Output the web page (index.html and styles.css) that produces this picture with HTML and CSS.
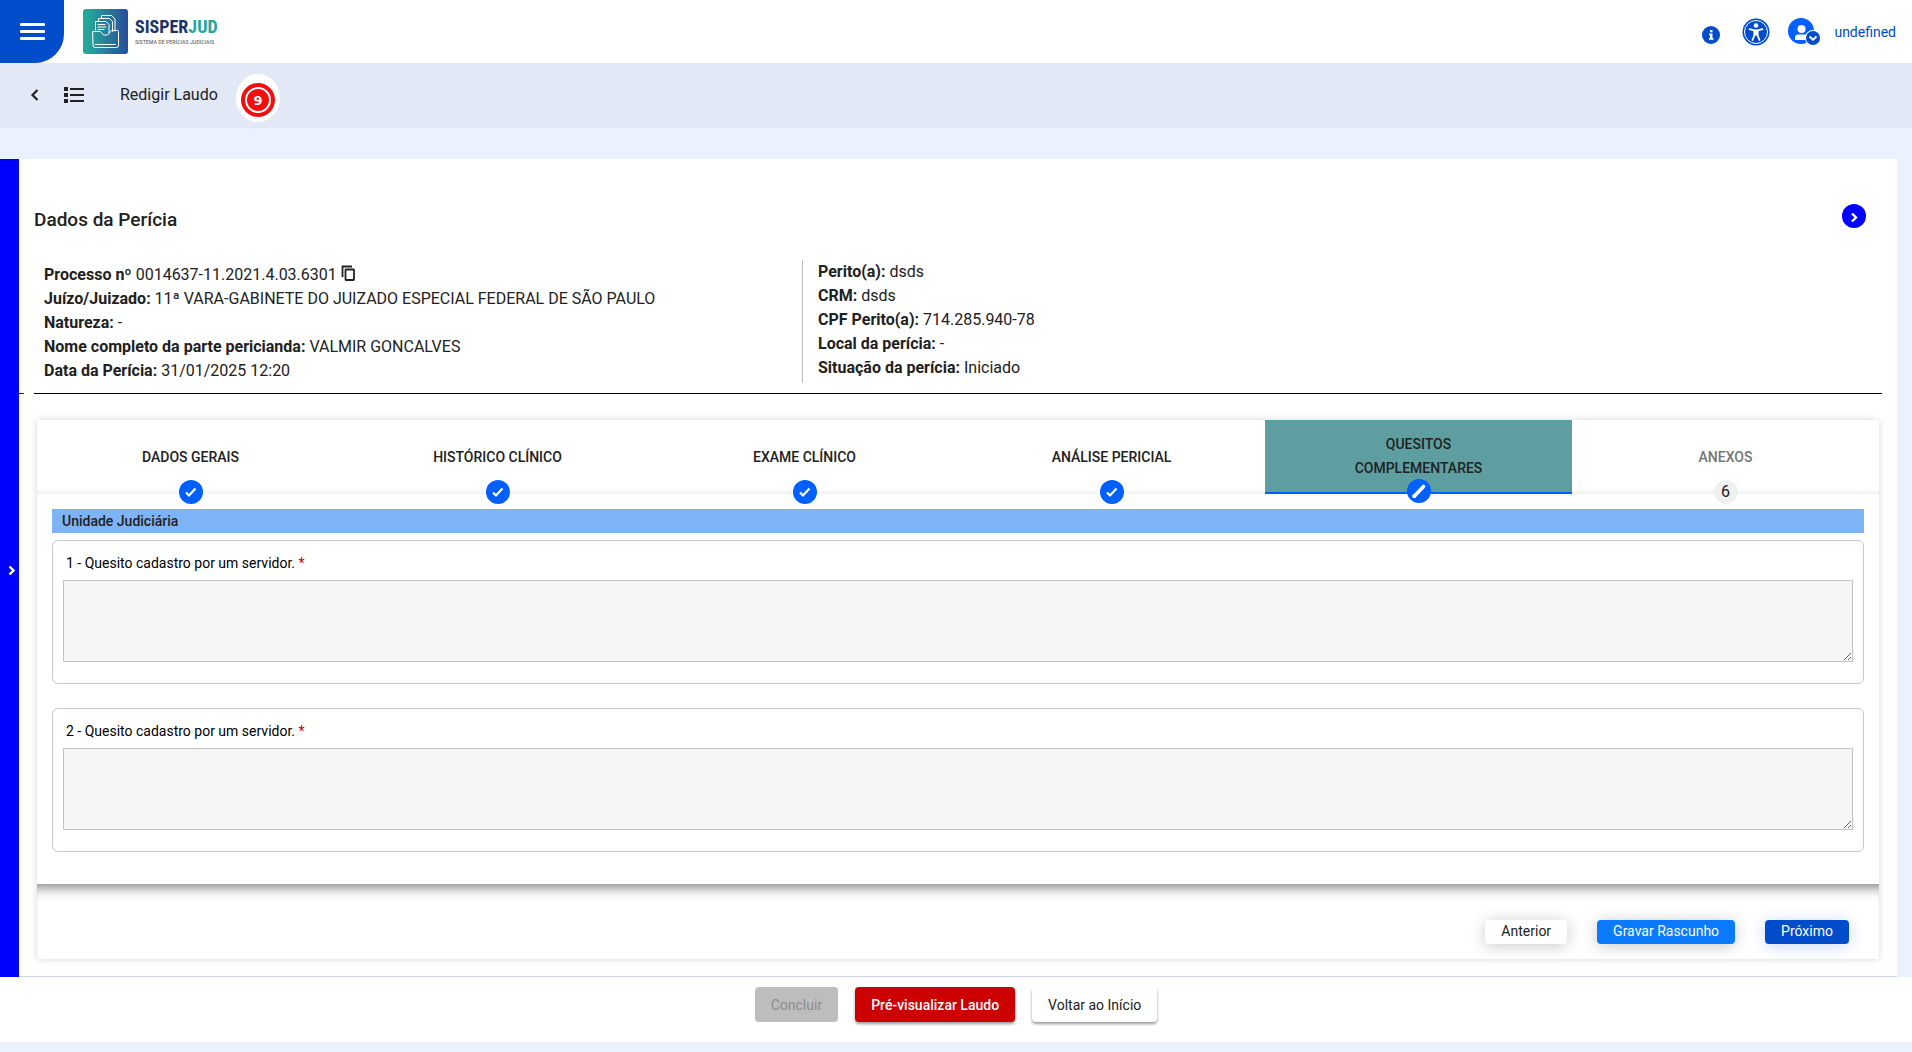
FILE: index.html
```html
<!DOCTYPE html>
<html lang="pt-BR">
<head>
<meta charset="utf-8">
<title>SISPERJUD - Redigir Laudo</title>
<link rel="stylesheet" href="styles.css">
</head>
<body>
<header class="topbar">
  <button class="menu-btn" type="button" aria-label="Menu">
    <svg width="26" height="18" viewBox="0 0 26 18" fill="#fff"><rect y="0" width="25" height="3" rx="1"/><rect y="7" width="25" height="3" rx="1"/><rect y="14" width="25" height="3" rx="1"/></svg>
  </button>
  <a class="brand" href="#">
    <svg width="45" height="45" viewBox="0 0 45 45" fill="none">
      <defs><linearGradient id="brandFill" x1="0" y1="0" x2="1" y2="0"><stop offset="0.1" stop-color="#26a69a"/><stop offset="1" stop-color="#2a4e9b"/></linearGradient></defs>
      <rect width="45" height="45" rx="3" fill="url(#brandFill)"/>
      <g stroke="#fff" stroke-width="1" stroke-linejoin="round" stroke-linecap="round">
        <path d="M12.500 21V12.500h10.500l3 3V24M15.500 12.500V9.500h11l3 3V22.500M18.500 9.500V6.500h10l3.500 3.500v12"/>
        <path d="M15 15.500h7M15 18h8M15 20.500h6"/>
        <path d="M10 22.500h7.500l3 3.500h4l4-4.500h6q1 0 1 1v14q0 2-2 2H12q-2 0-2-2z"/>
        <path d="M12.500 35.500h20"/>
      </g>
    </svg>
    <span class="brand-text"><strong class="brand-name">SISPER<span class="brand-accent">JUD</span></strong><span class="brand-tag">SISTEMA DE PERÍCIAS JUDICIAIS</span></span>
  </a>
  <nav class="top-actions">
    <button class="icon-btn info-btn" type="button" aria-label="Informações">
      <svg width="18" height="18" viewBox="0 0 18 18"><circle cx="9" cy="9" r="9" fill="#004ccb"/><path fill="#fff" d="M8 4h2.500v2.300H8zM7 7.500h3.500V12h1v1.700H7V12h1V9.200H7z"/></svg>
    </button>
    <button class="icon-btn" type="button" aria-label="Acessibilidade">
      <svg width="28" height="28" viewBox="0 0 28 28"><circle cx="14" cy="14" r="13.500" fill="#004ccb"/><circle cx="14" cy="14" r="11.500" fill="none" stroke="#fff" stroke-width="1"/><circle cx="14" cy="7.500" r="2.300" fill="#fff"/><path d="M7.500 11.200l4.500 1.200h4l4.500-1.200M12.500 13v4l-2 5M15.500 13v4l2 5" stroke="#fff" stroke-width="1.800" stroke-linecap="round" stroke-linejoin="round" fill="none"/><path fill="#fff" d="M11.700 11.800h4.600v5.700h-4.600z"/></svg>
    </button>
    <button class="user-btn" type="button">
      <svg width="32" height="30" viewBox="0 0 32 30"><circle cx="13" cy="14" r="13" fill="#0060ff"/><circle cx="13.500" cy="12" r="4" fill="#fff"/><path fill="#fff" d="M7 23v-2.500q0-3 3-3h7q3 0 3 3V23z"/><circle cx="25" cy="21" r="8" fill="#fff"/><circle cx="25" cy="21" r="7" fill="#004ccb"/><path d="M21.500 19.500l3.500 3.200 3.500-3.200" fill="none" stroke="#fff" stroke-width="2"/></svg>
      <span>undefined</span>
    </button>
  </nav>
</header>

<div class="subbar">
  <button class="icon-btn back-btn" type="button" aria-label="Voltar"><svg width="10" height="14" viewBox="0 0 10 14"><path d="M8.500 2L3.500 7l5 5" fill="none" stroke="#212121" stroke-width="2.200"/></svg></button>
  <button class="icon-btn list-btn" type="button" aria-label="Lista"><svg width="20" height="16" viewBox="0 0 20 16" fill="#212121"><path d="M0 0h4v4H0zM0 6h4v4H0zM0 12h4v4H0zM6 1h14v2H6zM6 7h14v2H6zM6 13h14v2H6z"/></svg></button>
  <span class="page-name">Redigir Laudo</span>
  <svg class="target" width="46" height="48" viewBox="0 0 46 48"><ellipse cx="22" cy="24" rx="22" ry="24" fill="#fff"/><circle cx="22" cy="26" r="17" fill="#f40d0d"/><circle cx="22" cy="26" r="12" fill="none" stroke="#fff" stroke-width="2"/><text class="target-num" x="22" y="31" text-anchor="middle">9</text></svg>
</div>

<main class="workspace">
  <button class="side-toggle" type="button" aria-label="Abrir painel"><svg width="7" height="11" viewBox="0 0 7 11"><path d="M1.500 1.500l4 4-4 4" fill="none" stroke="#fff" stroke-width="2.400"/></svg></button>
  <div class="sheet">
    <section class="exam">
      <div class="exam-head">
        <h1>Dados da Perícia</h1>
        <button class="round-btn" type="button" aria-label="Recolher"><svg width="24" height="24" viewBox="0 0 24 24"><circle cx="12" cy="12" r="12" fill="#00f"/><path d="M10 9.500l4 4-4 4" fill="none" stroke="#fff" stroke-width="2.400"/></svg></button>
      </div>
      <div class="exam-cols">
        <ul class="facts facts-left">
          <li><b>Processo nº</b> 0014637-11.2021.4.03.6301 <button class="icon-btn copy-btn" type="button" aria-label="Copiar"><svg width="15" height="16" viewBox="0 0 15 16" fill="none" stroke="#212121" stroke-width="1.800"><path d="M1.500 12V1.500H11"/><rect x="4.500" y="4.500" width="8.500" height="10.500" rx="0.500"/></svg></button></li>
          <li><b>Juízo/Juizado:</b> 11ª VARA-GABINETE DO JUIZADO ESPECIAL FEDERAL DE SÃO PAULO</li>
          <li><b>Natureza:</b> -</li>
          <li><b>Nome completo da parte pericianda:</b> VALMIR GONCALVES</li>
          <li><b>Data da Perícia:</b> 31/01/2025 12:20</li>
        </ul>
        <ul class="facts facts-right">
          <li><b>Perito(a):</b> dsds</li>
          <li><b>CRM:</b> dsds</li>
          <li><b>CPF Perito(a):</b> 714.285.940-78</li>
          <li><b>Local da perícia:</b> -</li>
          <li><b>Situação da perícia:</b> Iniciado</li>
        </ul>
      </div>
      <div class="rule"><span class="rule-stub"></span></div>
    </section>

    <section class="stepper">
      <nav class="steps">
        <button class="step" type="button">DADOS GERAIS<span class="dot"><svg width="14" height="14" viewBox="0 0 14 14"><path d="M2 7.500l3 3 6.500-7" fill="none" stroke="#fff" stroke-width="2.200"/></svg></span></button>
        <button class="step" type="button">HISTÓRICO CLÍNICO<span class="dot"><svg width="14" height="14" viewBox="0 0 14 14"><path d="M2 7.500l3 3 6.500-7" fill="none" stroke="#fff" stroke-width="2.200"/></svg></span></button>
        <button class="step" type="button">EXAME CLÍNICO<span class="dot"><svg width="14" height="14" viewBox="0 0 14 14"><path d="M2 7.500l3 3 6.500-7" fill="none" stroke="#fff" stroke-width="2.200"/></svg></span></button>
        <button class="step" type="button">ANÁLISE PERICIAL<span class="dot"><svg width="14" height="14" viewBox="0 0 14 14"><path d="M2 7.500l3 3 6.500-7" fill="none" stroke="#fff" stroke-width="2.200"/></svg></span></button>
        <button class="step step-active" type="button">QUESITOS<br>COMPLEMENTARES<span class="dot"><svg width="14" height="14" viewBox="0 0 14 14"><path d="M2.500 12L11.500 2.500" fill="none" stroke="#fff" stroke-width="3.600" stroke-linecap="round"/><path fill="#fff" d="M0.500 14v-4l4 4z"/></svg></span></button>
        <button class="step step-off" type="button">ANEXOS<span class="dot">6</span></button>
      </nav>
      <form class="questions">
        <h2>Unidade Judiciária</h2>
        <div class="question">
          <label for="q1">1 - Quesito cadastro por um servidor. <span class="req">*</span></label>
          <textarea id="q1"></textarea>
        </div>
        <div class="question">
          <label for="q2">2 - Quesito cadastro por um servidor. <span class="req">*</span></label>
          <textarea id="q2"></textarea>
        </div>
      </form>
      <div class="step-actions">
        <button class="btn-small" type="button">Anterior</button>
        <button class="btn-small btn-draft" type="button">Gravar Rascunho</button>
        <button class="btn-small btn-next" type="button">Próximo</button>
      </div>
    </section>
  </div>
</main>

<footer class="page-actions">
  <button class="btn btn-disabled" type="button" disabled>Concluir</button>
  <button class="btn btn-preview" type="button">Pré-visualizar Laudo</button>
  <button class="btn" type="button">Voltar ao Início</button>
</footer>
</body>
</html>
```
FILE: styles.css
```css
* { box-sizing: border-box; }

body {
  margin: 0;
  background: #ebf2ff;
  color: #212121;
  font-family: Roboto, "Liberation Sans", sans-serif;
  font-size: 16px;
  line-height: 24px;
}

button {
  margin: 0;
  padding: 0;
  border: 0;
  background: none;
  color: inherit;
  font: inherit;
}

svg { display: block; }

/* Top bar */
.topbar {
  display: flex;
  height: 63px;
  background: #fff;
}

.menu-btn {
  display: flex;
  align-items: center;
  padding: 0 18px 0 20px;
  background: #004ccb;
  border-bottom-right-radius: 29px;
}

.brand {
  display: flex;
  align-items: center;
  gap: 7px;
  margin-left: 19px;
  text-decoration: none;
}

.brand-text { display: flex; flex-direction: column; }

.brand-name {
  color: #1c3464;
  font-family: "Roboto Condensed", "Liberation Sans Narrow", Roboto, sans-serif;
  font-size: 18px;
  line-height: 20px;
}

.brand-accent { color: #26a69a; }

.brand-tag {
  color: #555;
  font-family: "Roboto Condensed", "Liberation Sans Narrow", Roboto, sans-serif;
  font-size: 6px;
  line-height: 10px;
}

.top-actions {
  display: flex;
  align-items: center;
  gap: 22px;
  margin-left: auto;
  padding-right: 16px;
}

.info-btn { padding-top: 6px; }

.user-btn {
  display: flex;
  align-items: center;
  gap: 14px;
  margin-left: -4px;
  color: #004ccb;
  font-size: 14px;
}

/* Sub bar */
.subbar {
  display: flex;
  align-items: center;
  height: 65px;
  padding: 0 0 2px 29px;
  background: #e2e8f5;
}

.list-btn { margin-left: 25px; }
.page-name { margin-left: 36px; }
.target { margin: 6px 0 0 18px; }

.target-num {
  fill: #fff;
  font-family: "DejaVu Sans", sans-serif;
  font-size: 13px;
  font-weight: 700;
}

/* Work area */
.workspace {
  display: flex;
  margin: 31px 15px 0 0;
}

.side-toggle {
  display: flex;
  align-items: center;
  justify-content: flex-end;
  flex: 0 0 19px;
  padding: 4px 4px 0 0;
  background: #00f;
}

.sheet {
  flex: 1;
  padding: 45px 18px 17px;
  background: #fff;
  border-bottom: 1px solid #ccd3e6;
}

.exam-head {
  display: flex;
  align-items: flex-start;
  justify-content: space-between;
  margin: 0 13px 0 -3px;
}

h1 {
  margin: 0;
  font-size: 19px;
  font-weight: 500;
  line-height: 32px;
}

.exam-cols {
  display: grid;
  grid-template-columns: 765px 1fr;
  margin-top: 24px;
}

.facts {
  margin: 0;
  padding: 0;
  list-style: none;
}

.facts-left { padding: 3px 0 0 7px; }

.facts-right {
  padding: 0 0 3px 15px;
  border-left: 1px solid #bbb;
}

.facts b { font-weight: 700; }

.copy-btn { vertical-align: middle; }
.copy-btn svg { margin-top: -6px; }

.rule {
  position: relative;
  height: 1px;
  margin: 10px -3px 0;
  background: #000;
}

.rule-stub {
  position: absolute;
  left: -15px;
  width: 5px;
  height: 1px;
  background: #00f;
}

/* Stepper */
.stepper {
  margin-top: 26px;
  box-shadow: 0 0 7px rgba(0, 0, 0, 0.16);
}

.steps {
  display: grid;
  grid-template-columns: repeat(6, 1fr);
  height: 74px;
  box-shadow: inset 0 -5px 5px -4px rgba(0, 0, 0, 0.1);
}

.step {
  position: relative;
  z-index: 1;
  font-size: 14px;
  font-weight: 500;
}

.step-active {
  border-bottom: 2px solid #0060ff;
  background: #5f9ea0;
}

.step-off { color: #757575; }

.dot {
  position: absolute;
  bottom: -10px;
  left: calc(50% - 12px);
  display: flex;
  align-items: center;
  justify-content: center;
  width: 24px;
  height: 24px;
  border-radius: 50%;
  background: #0060ff;
}

.step-active .dot { bottom: -11px; }

.step-off .dot {
  background: #f0f0f0;
  color: #212121;
  font-size: 16px;
  font-weight: 400;
}

.questions {
  display: flex;
  flex-direction: column;
  gap: 24px;
  padding: 15px 15px 32px;
}

h2 {
  margin: 0 0 -17px;
  padding-left: 10px;
  background: #7eb3f6;
  font-size: 14px;
  font-weight: 500;
  line-height: 24px;
}

.question {
  height: 144px;
  padding: 10px;
  border: 1px solid #c9c9c9;
  border-radius: 6px;
}

.question label {
  display: block;
  padding-left: 3px;
  color: #000;
  font-size: 14px;
}

.req { color: #c00; }

.question textarea {
  display: block;
  width: 100%;
  height: 82px;
  margin-top: 5px;
  border: 1px solid #c4c4c4;
  background: #f5f5f5;
  font: inherit;
}

.step-actions {
  display: flex;
  justify-content: flex-end;
  gap: 30px;
  padding: 36px 30px 15px;
  box-shadow: inset 0 14px 14px -12px rgba(0, 0, 0, 0.6);
}

.btn-small {
  height: 24px;
  padding: 0 16px 2px;
  border-radius: 4px;
  background: #fff;
  box-shadow: 0 2px 16px rgba(0, 0, 0, 0.22);
  font-size: 14px;
  line-height: 22px;
}

.btn-draft { background: #0a7aff; color: #fff; }

.btn-next {
  background: #004ccb;
  box-shadow: 0 2px 16px rgba(0, 76, 203, 0.22);
  color: #fff;
}

/* Page actions */
.page-actions {
  display: flex;
  justify-content: center;
  gap: 17px;
  height: 65px;
  padding-top: 10px;
  background: #fff;
}

.btn {
  height: 35px;
  padding: 0 16px;
  border-radius: 4px;
  background: #fff;
  box-shadow: 0 2px 3px rgba(0, 0, 0, 0.4);
  font-size: 14px;
}

.btn-preview { background: #c00; color: #fff; font-weight: 500; }

.btn-disabled {
  background: #bdbdbd;
  box-shadow: none;
  color: #8c8c8c;
}
```
